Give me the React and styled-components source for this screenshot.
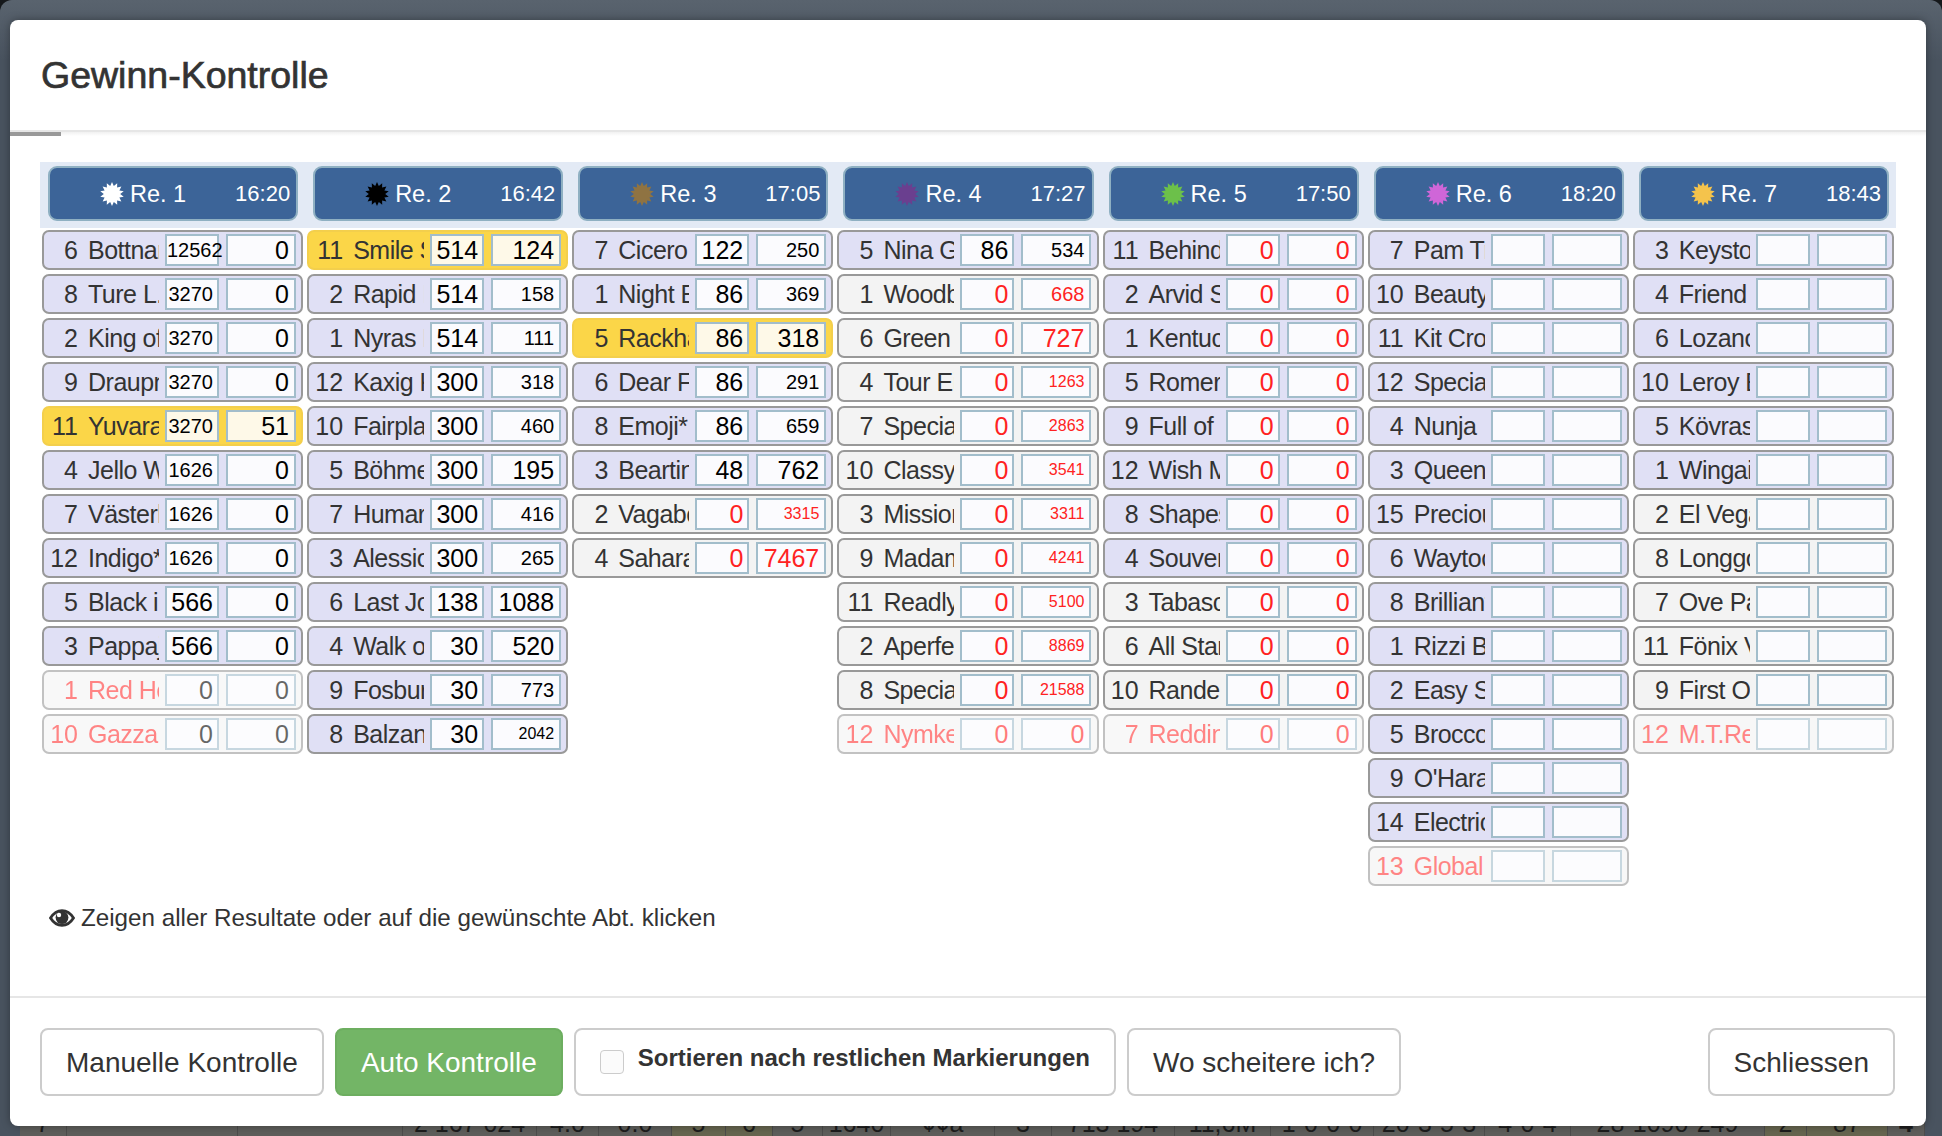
import React from 'react';
import styled, { createGlobalStyle } from 'styled-components';

const GlobalStyle = createGlobalStyle`
  html, body {
    margin: 0;
    padding: 0;
    background: #15181b;
  }
  * {
    box-sizing: border-box;
  }
`;

const Page = styled.div`
  position: relative;
  width: 1942px;
  height: 1136px;
  padding: 20px 16px 10px 10px;
  overflow: hidden;
  border-radius: 12px 12px 0 0;
  background: linear-gradient(#59636e, #49535f 60px);
  font-family: "Liberation Sans", Arial, sans-serif;
  color: #333;
`;

// table of the page behind the dialog, only its lower edge shows
const BackdropRow = styled.div`
  position: absolute;
  left: 20px;
  right: 17px;
  top: 1096px;
  height: 40px;
  display: flex;
  background: #5e5e5b;
  color: #1d1d1d;
  font-size: 25px;
  line-height: 28px;
`;

const BackdropCell = styled.div`
  flex: 0 0 ${(p) => p.$w}px;
  padding-top: ${(p) => (p.$low ? 36 : 13)}px;
  padding-left: ${(p) => (p.$low ? 8 : 0)}px;
  border-right: 1px solid #4c4c4b;
  text-align: ${(p) => (p.$low ? 'left' : 'center')};
  white-space: nowrap;
  overflow: hidden;
  font-weight: ${(p) => (p.$bold ? 700 : 400)};
  background: ${(p) => (p.$tint ? '#66654f' : 'transparent')};
`;

const Modal = styled.div`
  position: relative;
  z-index: 1;
  height: 1106px;
  display: flex;
  flex-direction: column;
  background: #fff;
  border-radius: 8px;
  box-shadow: 0 0 8px rgba(0, 0, 0, 0.35);
`;

const ModalHeader = styled.div`
  flex: 0 0 110px;
  display: flex;
  align-items: center;
  padding-left: 31px;
`;

const Title = styled.h4`
  margin: 0;
  font-size: 37.5px;
  font-weight: 400;
  -webkit-text-stroke: 0.7px #333;
  color: #333;
`;

const ProgressTrack = styled.div`
  flex: 0 0 6px;
  border-top: 2px solid #e6e6e6;
  background: linear-gradient(#f1f1f1, #fff);
`;

const ProgressFill = styled.div`
  height: 4px;
  background: #999;
`;

const ModalBody = styled.div`
  flex: 1;
  padding: 26px 30px 0;
`;

const RaceHeaderRow = styled.div`
  display: grid;
  grid-template-columns: repeat(7, minmax(0, 1fr));
  height: 66px;
  background: #e3eaf5;
`;

const RaceHeader = styled.div`
  display: flex;
  align-items: center;
  margin: 4px 7px 7px 8px;
  padding: 0 6px 0 50px;
  border: 2px solid #8fb0c2;
  border-radius: 9px;
  background: #3c6498;
  color: #fff;
`;

const RaceStar = styled.svg`
  flex: 0 0 24px;
  width: 24px;
  height: 24px;
  margin-right: 6px;
`;

const RaceLabel = styled.span`
  padding-top: 1px;
  font-size: 23.5px;
`;

const RaceTime = styled.span`
  margin-left: auto;
  font-size: 22px;
`;

const Columns = styled.div`
  display: grid;
  grid-template-columns: repeat(7, minmax(0, 1fr));
  align-items: start;
  padding-top: 2px;
`;

const Column = styled.div`
  display: flex;
  flex-direction: column;
  gap: 4px;
  padding: 0 2px;
`;

const kindBg = { plain: '#e0e0f5', gold: '#fbd648', gray: '#f3f3f3', fade: '#f3f3f3' };

const Row = styled.div`
  display: flex;
  align-items: center;
  height: 40px;
  border: 2px solid ${(p) => (p.$kind === 'gold' ? '#f3cf4c' : '#999')};
  border-radius: 7px;
  background: ${(p) => kindBg[p.$kind]};
  opacity: ${(p) => (p.$kind === 'fade' ? 0.6 : 1)};
`;

const RunnerName = styled.div`
  flex: 0 0 115px;
  overflow: hidden;
  white-space: nowrap;
  font-size: 25px;
  letter-spacing: -0.5px;
  color: ${(p) => (p.$fade ? '#f33' : '#333')};
`;

const RunnerNo = styled.span`
  display: inline-block;
  width: 34px;
  margin-right: 10px;
  text-align: right;
  letter-spacing: 0;
`;

const Value = styled.div`
  height: 32px;
  min-width: 0;
  line-height: 28px;
  text-align: right;
  white-space: nowrap;
  border: 2px solid #a2bdcb;
  background: ${(p) => (p.$gold ? '#fef9e8' : '#fbfbfe')};
  color: ${(p) => (p.$red ? '#f22' : '#000')};
  font-size: ${(p) => p.$size}px;
`;

const LeftValue = styled(Value)`
  flex: 0 0 54px;
  margin-left: 6px;
  padding: 0 4px 0 0;
`;

const RightValue = styled(Value)`
  flex: 0 0 70px;
  margin-left: 7px;
  padding-right: 5px;
`;

const Hint = styled.div`
  display: flex;
  align-items: center;
  gap: 6px;
  margin-top: 18px;
  padding-left: 9px;
  font-size: 24.2px;
  color: #333;
`;

const ModalFooter = styled.div`
  flex: 0 0 130px;
  display: flex;
  align-items: flex-start;
  gap: 11px;
  padding: 30px 31px 0 30px;
  border-top: 2px solid #e6e6e6;
`;

const Button = styled.button`
  height: 68px;
  padding: 2px 24px 0;
  border: 2px solid ${(p) => (p.$green ? '#6dae60' : '#ccc')};
  border-radius: 8px;
  background: ${(p) => (p.$green ? '#73b566' : '#fff')};
  color: ${(p) => (p.$green ? '#fff' : '#333')};
  font-family: inherit;
  font-size: 28px;
`;

const CloseButton = styled(Button)`
  margin-left: auto;
`;

const SortBox = styled.label`
  display: flex;
  align-items: center;
  gap: 14px;
  height: 68px;
  padding: 0 24px;
  border: 2px solid #ccc;
  border-radius: 8px;
`;

const SortCheck = styled.span`
  width: 24px;
  height: 24px;
  border: 1px solid #ccc;
  border-radius: 4px;
  background: #fbfbfb;
`;

const SortLabel = styled.span`
  padding-bottom: 8px;
  font-size: 24px;
  font-weight: 700;
`;

const races = [
  { label: 'Re. 1', time: '16:20', color: '#fff' },
  { label: 'Re. 2', time: '16:42', color: '#000' },
  { label: 'Re. 3', time: '17:05', color: '#8f7342' },
  { label: 'Re. 4', time: '17:27', color: '#6a3f8f' },
  { label: 'Re. 5', time: '17:50', color: '#6cc04a' },
  { label: 'Re. 6', time: '18:20', color: '#cf66d8' },
  { label: 'Re. 7', time: '18:43', color: '#f4c34c' },
];

// [no, name, left, right, kind, red, bigRight]
const columns = [
  [
    [6, 'Bottnar', '12562', '0'], [8, 'Ture L...', '3270', '0'], [2, 'King of', '3270', '0'],
    [9, 'Draupner', '3270', '0'], [11, 'Yuvaraj', '3270', '51', 'gold'], [4, 'Jello Wo', '1626', '0'],
    [7, 'Västerby', '1626', '0'], [12, 'Indigo*', '1626', '0'], [5, 'Black in', '566', '0'],
    [3, 'Pappaj', '566', '0'], [1, 'Red Hot', '0', '0', 'fade'], [10, 'Gazza', '0', '0', 'fade'],
  ],
  [
    [11, 'Smile Sun', '514', '124', 'gold', false, true], [2, 'Rapid Ma', '514', '158'], [1, 'Nyras Ko', '514', '111'],
    [12, 'Kaxig Ka', '300', '318'], [10, 'Fairplay', '300', '460'], [5, 'Böhmen', '300', '195', 'plain', false, true],
    [7, 'Humar', '300', '416'], [3, 'Alessio', '300', '265'], [6, 'Last Job', '138', '1088', 'plain', false, true],
    [4, 'Walk on', '30', '520', 'plain', false, true], [9, 'Fosbury', '30', '773'], [8, 'Balzan', '30', '2042'],
  ],
  [
    [7, 'Cicero', '122', '250'], [1, 'Night Ex', '86', '369'], [5, 'Rackham', '86', '318', 'gold', false, true],
    [6, 'Dear Fri', '86', '291'], [8, 'Emoji*', '86', '659'], [3, 'Bearting', '48', '762', 'plain', false, true],
    [2, 'Vagabond', '0', '3315', 'gray', true], [4, 'Sahara', '0', '7467', 'gray', true, true],
  ],
  [
    [5, 'Nina Gold', '86', '534'], [1, 'Woodbine', '0', '668', 'gray', true], [6, 'Green ', '0', '727', 'gray', true, true],
    [4, 'Tour Eiffel', '0', '1263', 'gray', true], [7, 'Special', '0', '2863', 'gray', true], [10, 'Classy', '0', '3541', 'gray', true],
    [3, 'Mission', '0', '3311', 'gray', true], [9, 'Madame', '0', '4241', 'gray', true], [11, 'Readly', '0', '5100', 'gray', true],
    [2, 'Aperfect', '0', '8869', 'gray', true], [8, 'Special', '0', '21588', 'gray', true], [12, 'Nymkerk', '0', '0', 'fade', true],
  ],
  [
    [11, 'Behind', '0', '0', 'plain', true], [2, 'Arvid Sun', '0', '0', 'plain', true], [1, 'Kentucky', '0', '0', 'plain', true],
    [5, 'Romero', '0', '0', 'plain', true], [9, 'Full of', '0', '0', 'plain', true], [12, 'Wish Me', '0', '0', 'plain', true],
    [8, 'Shapes', '0', '0', 'plain', true], [4, 'Souvenir', '0', '0', 'plain', true], [3, 'Tabasco', '0', '0', 'gray', true],
    [6, 'All Star', '0', '0', 'gray', true], [10, 'Randers', '0', '0', 'gray', true], [7, 'Redding', '0', '0', 'fade', true],
  ],
  [
    [7, 'Pam Tri', '', ''], [10, 'Beauty', '', ''], [11, 'Kit Crown', '', ''], [12, 'Special', '', ''], [4, 'Nunja', '', ''],
    [3, 'Queen', '', ''], [15, 'Precious', '', ''], [6, 'Waytoco', '', ''], [8, 'Brilliant', '', ''], [1, 'Rizzi Bo', '', ''],
    [2, 'Easy Sun', '', ''], [5, 'Broccoli', '', ''], [9, "O'Hara", '', ''], [14, 'Electric', '', ''], [13, 'Global', '', '', 'fade'],
  ],
  [
    [3, 'Keystone', '', ''], [4, 'Friend', '', ''], [6, 'Lozano', '', ''], [10, 'Leroy Boy', '', ''], [5, 'Kövrasse', '', ''],
    [1, 'Wingait', '', ''], [2, 'El Vegas', '', '', 'gray'], [8, 'Longgone', '', '', 'gray'], [7, 'Ove Palm', '', '', 'gray'],
    [11, 'Fönix Van', '', '', 'gray'], [9, 'First One', '', '', 'gray'], [12, 'M.T.Red', '', '', 'fade'],
  ],
];

const backdropCells = [
  { w: 47, text: '7' }, { w: 171, text: 'Tamarack', low: true }, { w: 165, text: 'Tosh', low: true },
  { w: 134, text: '2 167 024' }, { w: 62, text: '4.0' }, { w: 73, text: '0.0' },
  { w: 54, text: '5', tint: true }, { w: 47, text: '6', tint: true }, { w: 50, text: '5' }, { w: 68, text: '1640' },
  { w: 104, text: '¢¢a' }, { w: 57, text: '3' }, { w: 123, text: '713 194' }, { w: 96, text: '11,6M' },
  { w: 103, text: '1-0-0-0' }, { w: 111, text: '20-3-5-3' }, { w: 86, text: '4-0-4' }, { w: 194, text: '28-1090-249' },
  { w: 42, text: '2', tint: true }, { w: 81, text: '87', tint: true }, { w: 37, text: '4', bold: true },
];

const starPoints = (spikes, outer, inner) => {
  const pts = [];
  for (let i = 0; i < spikes * 2; i += 1) {
    const r = i % 2 === 0 ? outer : inner;
    const a = (Math.PI * i) / spikes - Math.PI / 2;
    pts.push(`${(12 + r * Math.cos(a)).toFixed(2)},${(12 + r * Math.sin(a)).toFixed(2)}`);
  }
  return pts.join(' ');
};

const Star = ({ color }) => (
  <RaceStar viewBox="0 0 24 24">
    <polygon points={starPoints(14, 12, 8.2)} fill={color} />
  </RaceStar>
);

const EyeIcon = () => (
  <svg width="26" height="18" viewBox="0 0 26 18">
    <path d="M1.5 9C4.5 4.2 8.5 1.6 13 1.6S21.5 4.2 24.5 9C21.5 13.8 17.5 16.4 13 16.4S4.5 13.8 1.5 9Z" fill="none" stroke="#333" strokeWidth="2.8" />
    <circle cx="13" cy="8.6" r="6.4" fill="#333" />
    <circle cx="10" cy="6" r="2.2" fill="#fff" />
  </svg>
);

const rightSize = (value, big) => {
  if (big || value.length < 3) return 25;
  return value.length === 3 ? 20 : 16;
};

const RunnerRow = ({ runner }) => {
  const [no, name, left, right, kind = 'plain', red = false, big = false] = runner;
  const gold = kind === 'gold';
  return (
    <Row $kind={kind}>
      <RunnerName $fade={kind === 'fade'}>
        <RunnerNo>{no}</RunnerNo>
        {name}
      </RunnerName>
      <LeftValue $gold={gold} $red={red} $size={left.length > 3 ? 20 : 25}>{left}</LeftValue>
      <RightValue $gold={gold} $red={red} $size={rightSize(right, big)}>{right}</RightValue>
    </Row>
  );
};

const App = () => (
  <Page>
    <GlobalStyle />
    <BackdropRow>
      {backdropCells.map((cell) => (
        <BackdropCell key={`${cell.text}${cell.w}`} $w={cell.w} $low={cell.low} $tint={cell.tint} $bold={cell.bold}>
          {cell.text}
        </BackdropCell>
      ))}
    </BackdropRow>
    <Modal>
      <ModalHeader>
        <Title>Gewinn-Kontrolle</Title>
      </ModalHeader>
      <ProgressTrack>
        <ProgressFill style={{ width: 51 }} />
      </ProgressTrack>
      <ModalBody>
        <RaceHeaderRow>
          {races.map((race) => (
            <RaceHeader key={race.label}>
              <Star color={race.color} />
              <RaceLabel>{race.label}</RaceLabel>
              <RaceTime>{race.time}</RaceTime>
            </RaceHeader>
          ))}
        </RaceHeaderRow>
        <Columns>
          {columns.map((runners, i) => (
            <Column key={races[i].label}>
              {runners.map((runner) => (
                <RunnerRow key={runner[0]} runner={runner} />
              ))}
            </Column>
          ))}
        </Columns>
        <Hint>
          <EyeIcon />
          Zeigen aller Resultate oder auf die gewünschte Abt. klicken
        </Hint>
      </ModalBody>
      <ModalFooter>
        <Button>Manuelle Kontrolle</Button>
        <Button $green>Auto Kontrolle</Button>
        <SortBox>
          <SortCheck />
          <SortLabel>Sortieren nach restlichen Markierungen</SortLabel>
        </SortBox>
        <Button>Wo scheitere ich?</Button>
        <CloseButton>Schliessen</CloseButton>
      </ModalFooter>
    </Modal>
  </Page>
);

export default App;
